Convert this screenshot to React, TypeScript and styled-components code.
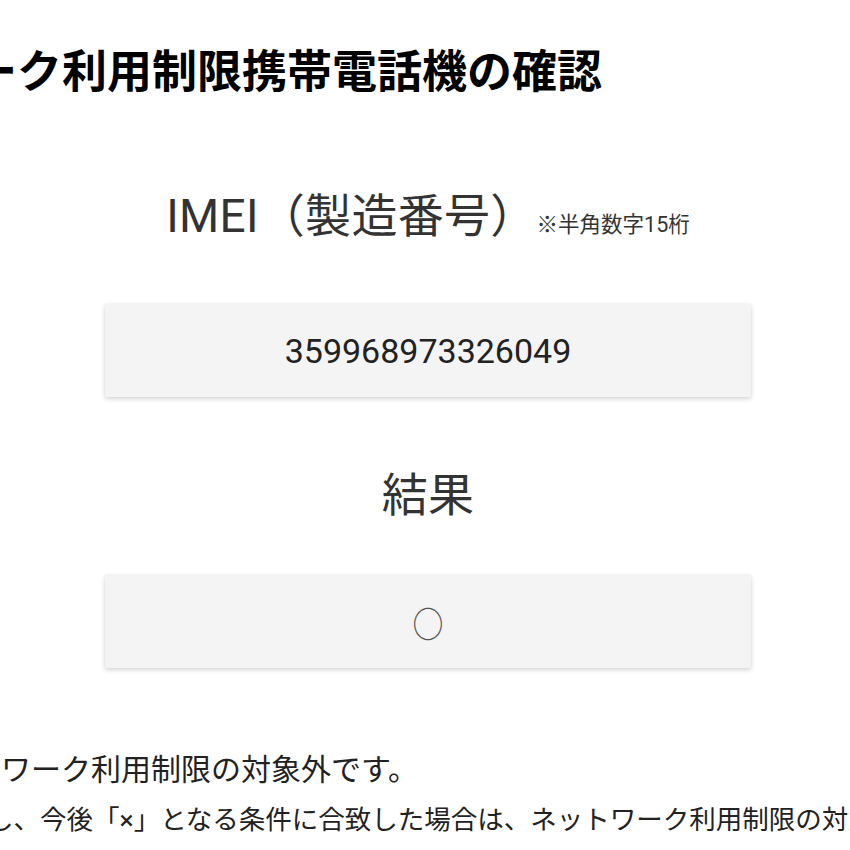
import React from 'react';
import styled, { createGlobalStyle } from 'styled-components';

const GlobalStyle = createGlobalStyle`
  html, body {
    margin: 0;
    padding: 0;
    background: #ffffff;
    overflow: hidden;
  }
  body {
    font-family: Roboto, "Noto Sans CJK JP", "Noto Sans", sans-serif;
    color: #333333;
  }
`;

const Page = styled.div`
  width: 850px;
  height: 850px;
  overflow: hidden;
`;

const Title = styled.h1`
  margin: 50px 0 0 -208px;
  font-size: 45px;
  line-height: 45px;
  font-weight: 700;
  color: #000000;
  white-space: nowrap;
`;

const Form = styled.section`
  width: 646px;
  margin-left: 105px;
  display: flex;
  flex-direction: column;
`;

const FieldHead = styled.div<{ $top: number }>`
  margin-top: ${(p) => p.$top}px;
  display: flex;
  justify-content: center;
  align-items: baseline;
  white-space: nowrap;
`;

const FieldLabel = styled.span`
  font-size: 46px;
  line-height: 46px;
  letter-spacing: 0.3px;
  color: #333333;
`;

const Note = styled.span`
  font-size: 21.5px;
  color: #333333;
  margin-left: 0;
`;

const ValueBox = styled.div<{ $top: number }>`
  margin-top: ${(p) => p.$top}px;
  height: 93px;
  background: #f4f4f4;
  box-shadow: 0 2px 5px rgba(0, 0, 0, 0.16), 0 0 2px rgba(0, 0, 0, 0.06);
  display: flex;
  align-items: center;
  justify-content: center;
  font-size: 34px;
  color: #222222;
`;

const Mark = styled.span`
  display: inline-block;
  font-size: 36px;
  color: #555555;
  transform: scale(0.86, 1);
`;

const Notice = styled.div`
  margin-top: 77px;
  line-height: 50px;
  color: #222222;
`;

const NoticeLine = styled.p<{ $shift: number; $size: number }>`
  margin: 0 0 0 ${(p) => p.$shift}px;
  font-size: ${(p) => p.$size}px;
  white-space: nowrap;
`;

export default function App() {
  return (
    <Page>
      <GlobalStyle />
      <Title>ネットワーク利用制限携帯電話機の確認</Title>
      <Form>
        <FieldHead $top={98}>
          <FieldLabel>IMEI（製造番号）</FieldLabel>
          <Note>※半角数字15桁</Note>
        </FieldHead>
        <ValueBox $top={65}>359968973326049</ValueBox>
        <FieldHead $top={75}>
          <FieldLabel>結果</FieldLabel>
        </FieldHead>
        <ValueBox $top={57}>
          <Mark>○</Mark>
        </ValueBox>
      </Form>
      <Notice>
        <NoticeLine $shift={-89} $size={30}>
          ネットワーク利用制限の対象外です。
        </NoticeLine>
        <NoticeLine $shift={-66} $size={26.5}>
          ただし、今後「×」となる条件に合致した場合は、ネットワーク利用制限の対象となります。
        </NoticeLine>
      </Notice>
    </Page>
  );
}
